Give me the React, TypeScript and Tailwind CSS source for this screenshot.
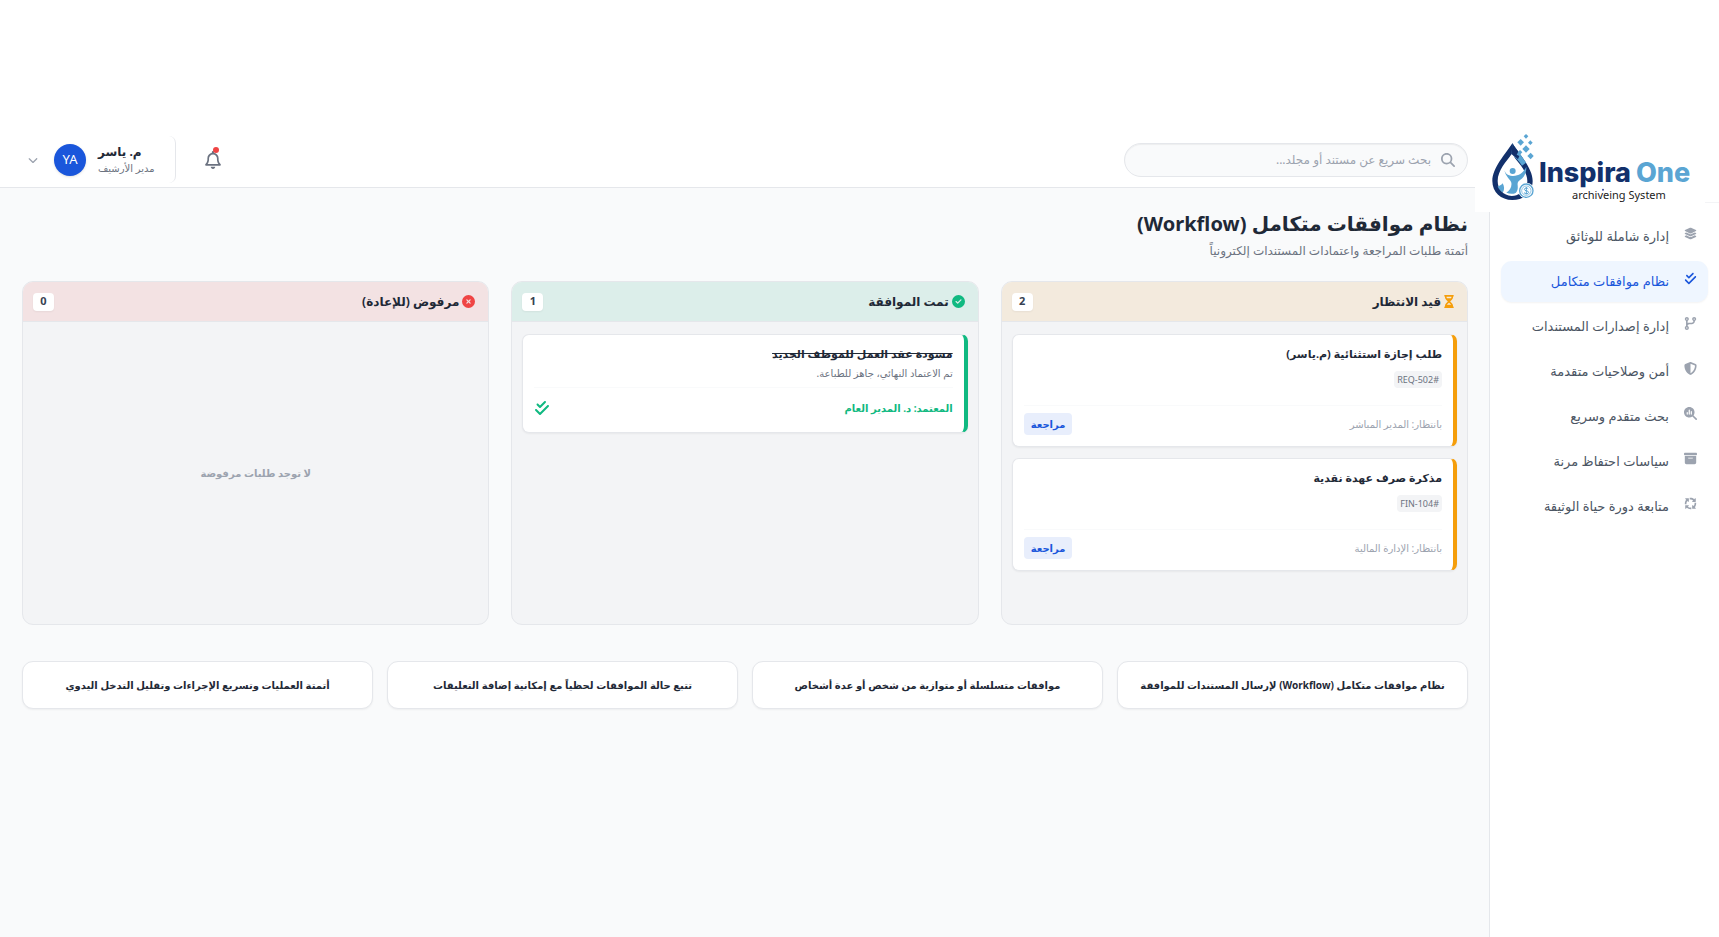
import type { ReactNode } from "react";
import {
  FaArrowsSpin,
  FaBoxArchive,
  FaCheckDouble,
  FaChevronDown,
  FaCircleCheck,
  FaCircleXmark,
  FaCodeBranch,
  FaHourglassHalf,
  FaLayerGroup,
  FaMagnifyingGlass,
  FaMagnifyingGlassChart,
  FaRegBell,
  FaShieldHalved,
} from "react-icons/fa6";

const navItems = [
  { label: "إدارة شاملة للوثائق", icon: FaLayerGroup, active: false },
  { label: "نظام موافقات متكامل", icon: FaCheckDouble, active: true },
  { label: "إدارة إصدارات المستندات", icon: FaCodeBranch, active: false },
  { label: "أمن وصلاحيات متقدمة", icon: FaShieldHalved, active: false },
  { label: "بحث متقدم وسريع", icon: FaMagnifyingGlassChart, active: false },
  { label: "سياسات احتفاظ مرنة", icon: FaBoxArchive, active: false },
  { label: "متابعة دورة حياة الوثيقة", icon: FaArrowsSpin, active: false },
];

const pending = [
  { title: "طلب إجازة استثنائية (م.ياسر)", code: "#REQ-502", waiting: "بانتظار: المدير المباشر" },
  { title: "مذكرة صرف عهدة نقدية", code: "#FIN-104", waiting: "بانتظار: الإدارة المالية" },
];

const features = [
  "نظام موافقات متكامل (Workflow) لإرسال المستندات للموافقة",
  "موافقات متسلسلة أو متوازية من شخص أو عدة أشخاص",
  "تتبع حالة الموافقات لحظياً مع إمكانية إضافة التعليقات",
  "أتمتة العمليات وتسريع الإجراءات وتقليل التدخل اليدوي",
];

function Logo() {
  return (
    <svg
      viewBox="15 24 690 252"
      className="absolute top-0 left-[-15px] h-[84px] w-[230px] bg-white"
      role="img"
      aria-label="Inspira One archiveing System"
      direction="ltr"
    >
      <path
        d="M127 70C107 101 67 144 67 183c0 34 26 57 60 57s61-23 61-57c0-39-41-82-61-113z"
        fill="#12306b"
      />
      <path
        d="M125 103C109 124 83 152 83 183c0 25 17 43 42 45 28-2 47-20 47-45 0-31-31-59-47-80z"
        fill="#fff"
      />
      <path d="M127 70c11 17 28 37 41 58l-12 9c-9-14-21-25-31-34z" fill="#5aa5d3" />
      <path d="M127 70c5 8 12 17 18 25l-5 9 8 4-4 10c-7-6-13-10-19-15z" fill="#12306b" />
      <path d="M125 103l9 9-9 9-5-11z" fill="#fff" />
      <circle cx="128" cy="153" r="9" fill="#5aa5d3" />
      <path
        d="M103 147c1 13 10 20 24 21 19 1 33-9 42-28 1 18-7 32-19 40-6 4-8 9-7 16 1 10 0 17-6 23-9 4-19 3-28-1 11-8 17-18 15-30-2-10-19-18-21-41z"
        fill="#5aa5d3"
      />
      <path d="M98 190c5 9 6 18 1 27-8-4-13-10-16-18 5-1 11-4 15-9z" fill="#5aa5d3" />
      <circle cx="169" cy="212" r="24" fill="#fff" />
      <circle cx="169" cy="212" r="20" fill="#fff" stroke="#5aa5d3" strokeWidth="4" />
      <circle cx="169" cy="212" r="14" fill="none" stroke="#5aa5d3" strokeWidth="2" />
      <path
        d="M175 207c-2-4-12-4-12 1 0 6 13 3 13 9 0 5-11 5-14 1M169 201v22"
        fill="none"
        stroke="#5aa5d3"
        strokeWidth="3"
      />
      <g fill="#5aa5d3">
        <path d="M168 42l7 7-7 7-7-7z" />
        <path d="M152 57l10 10-10 10-10-10z" />
        <path d="M181 61l7 7-7 7-7-7z" />
        <path d="M168 76l11 11-11 11-11-11z" />
        <path d="M182 98l9 10-9 10-10-10z" />
        <path d="M150 90l7 7-7 7-7-7z" />
      </g>
      <g fontFamily="Inter, sans-serif" fontWeight="800" fontSize="81">
        <text x="207" y="186" fill="#12306b">Inspira</text>
        <text x="498" y="186" fill="#5aa5d3">One</text>
      </g>
      <text x="306" y="236" fontFamily="'Noto Sans', sans-serif" fontSize="33" fill="#1b1b1b">
        archiveing System
      </text>
      <circle cx="399" cy="209" r="3" fill="#3b4a9a" />
    </svg>
  );
}

function Column({
  title,
  count,
  icon,
  tint,
  children,
}: {
  title: string;
  count: number;
  icon: ReactNode;
  tint: string;
  children: ReactNode;
}) {
  return (
    <section className="flex min-h-[344px] flex-col overflow-hidden rounded-[11px] border border-[#e5e7eb] bg-[#f3f4f6]">
      <header className={`flex h-10 items-center justify-between border-b border-[#e5e7eb] ps-[13px] pe-[10px] ${tint}`}>
        <h2 className="flex items-center gap-[3px] text-xs font-bold text-[#1f2937]">
          {icon}
          {title}
        </h2>
        <span className="flex h-[18px] min-w-[21px] items-center justify-center rounded bg-white px-1 text-[11px] font-bold text-[#374151] shadow-xs">
          {count}
        </span>
      </header>
      <div className="flex flex-1 flex-col gap-[11px] px-[10px] py-3">{children}</div>
    </section>
  );
}

export default function App() {
  return (
    <div
      dir="rtl"
      className="flex min-h-screen flex-col bg-white pt-32 font-['Noto_Sans','DejaVu_Sans',sans-serif] text-[#1f2937]"
    >
      <div className="flex flex-1">
        <aside className="w-[230px] shrink-0 border-l border-[#e5e7eb] bg-white">
          <div className="relative h-[75px] border-b border-[#f3f4f6]">
            <Logo />
          </div>
          <nav className="flex flex-col gap-1 px-[11px] pt-[13px]">
            {navItems.map(({ label, icon: Icon, active }) => (
              <a
                key={label}
                href="#"
                className={`flex h-[41px] items-center gap-[15px] rounded-[11px] px-[11px] text-[13px] ${
                  active ? "bg-[#eff6ff] text-[#1a56db] shadow-xs" : "text-[#4b5563]"
                }`}
              >
                <Icon className={`mb-[6px] size-[13px] shrink-0 ${active ? "text-[#1a56db]" : "text-[#9ca3af]"}`} />
                <span className="whitespace-nowrap">{label}</span>
              </a>
            ))}
          </nav>
        </aside>

        <div className="flex min-w-0 flex-1 flex-col">
          <header className="flex h-[60px] items-center justify-between border-b border-[#e5e7eb] bg-white ps-[21px] pe-7 pt-1 shadow-xs">
            <label className="flex h-[34px] w-[344px] items-center gap-[10px] rounded-full border border-[#e5e7eb] bg-[#f9fafb] px-3 inset-shadow-xs">
              <FaMagnifyingGlass className="size-[14px] shrink-0 text-[#9ca3af]" />
              <input
                type="search"
                aria-label="بحث"
                placeholder="بحث سريع عن مستند أو مجلد..."
                className="min-w-0 flex-1 bg-transparent text-xs outline-none placeholder:text-[#9ca3af]"
              />
            </label>
            <div className="flex items-center gap-6">
              <button type="button" aria-label="الإشعارات" className="relative p-1 text-[#6b7280]">
                <FaRegBell className="size-[18px]" />
                <span className="absolute top-0 right-[7px] size-[6px] rounded-full bg-[#ef4444]" />
              </button>
              <button
                type="button"
                className="flex h-[47px] items-center gap-3 rounded-[7px] border-r border-[#e5e7eb] pr-[18px]"
              >
                <span className="flex min-w-[59px] flex-col text-end">
                  <span className="text-xs leading-4 font-bold text-[#1f2937]">م. ياسر</span>
                  <span className="text-[10px] leading-4 text-[#6b7280]">مدير الأرشيف</span>
                </span>
                <span className="flex size-8 items-center justify-center rounded-full bg-[#1a56db] text-[13px] text-white shadow-sm">
                  YA
                </span>
                <FaChevronDown className="ms-1 size-[10px] text-[#9ca3af]" />
              </button>
            </div>
          </header>

          <main className="flex-1 bg-[#f9fafb] ps-[21px] pe-[22px] pt-[21px] pb-6">
            <h1 className="text-xl leading-[30px] font-bold text-[#1f2937]">نظام موافقات متكامل (Workflow)</h1>
            <p className="text-xs leading-6 text-[#6b7280]">أتمتة طلبات المراجعة واعتمادات المستندات إلكترونياً</p>

            <div className="mt-[18px] grid grid-cols-3 gap-[22px]">
              <Column
                title="قيد الانتظار"
                count={2}
                tint="bg-[#f3eadd]"
                icon={<FaHourglassHalf className="h-[13px] w-[10px] text-[#f59e0b]" />}
              >
                {pending.map((item) => (
                  <article
                    key={item.code}
                    className="flex h-[113px] flex-col rounded-[7px] border border-r-4 border-[#e5e7eb] border-r-[#f59e0b] bg-white p-[11px] shadow-xs"
                  >
                    <h3 className="text-[11px] leading-4 font-bold text-[#1f2937]">{item.title}</h3>
                    <span className="mt-[9px] flex h-[17px] items-center self-start rounded bg-[#f3f4f6] px-[3px] text-[9px] text-[#6b7280]">
                      {item.code}
                    </span>
                    <div className="mt-auto flex items-center justify-between border-t border-[#f9fafb] pt-[7px]">
                      <span className="text-[10px] text-[#9ca3af]">{item.waiting}</span>
                      <button
                        type="button"
                        className="h-[22px] rounded bg-[#e8eefc] px-[7px] text-[10px] font-bold text-[#1a56db]"
                      >
                        مراجعة
                      </button>
                    </div>
                  </article>
                ))}
              </Column>

              <Column
                title="تمت الموافقة"
                count={1}
                tint="bg-[#dceeea]"
                icon={<FaCircleCheck className="size-[13px] text-[#10b981]" />}
              >
                <article className="flex h-[99px] flex-col rounded-[7px] border border-r-4 border-[#e5e7eb] border-r-[#10b981] bg-white p-[11px] shadow-xs">
                  <h3 className="text-[11px] leading-4 font-bold text-[#1f2937] line-through">
                    مسودة عقد العمل للموظف الجديد
                  </h3>
                  <p className="mt-[3px] text-[10px] leading-4 text-[#6b7280]">تم الاعتماد النهائي، جاهز للطباعة.</p>
                  <div className="mt-[6px] flex items-center justify-between border-t border-[#f9fafb] pt-3 text-[#10b981]">
                    <span className="text-[10px] leading-4 font-bold">المعتمد: د. المدير العام</span>
                    <FaCheckDouble className="size-4" />
                  </div>
                </article>
              </Column>

              <Column
                title="مرفوض (للإعادة)"
                count={0}
                tint="bg-[#f3e2e3]"
                icon={<FaCircleXmark className="size-[13px] text-[#ef4444]" />}
              >
                <p className="m-auto text-[10px] font-bold text-[#9ca3af]">لا توجد طلبات مرفوضة</p>
              </Column>
            </div>

            <ul className="mt-9 grid grid-cols-4 gap-[14px]">
              {features.map((text) => (
                <li
                  key={text}
                  className="flex h-12 items-center justify-center rounded-[11px] border border-[#e5e7eb] bg-white px-2 text-center text-[10px] font-bold text-[#1f2937] shadow-xs"
                >
                  {text}
                </li>
              ))}
            </ul>
          </main>
        </div>
      </div>
    </div>
  );
}
